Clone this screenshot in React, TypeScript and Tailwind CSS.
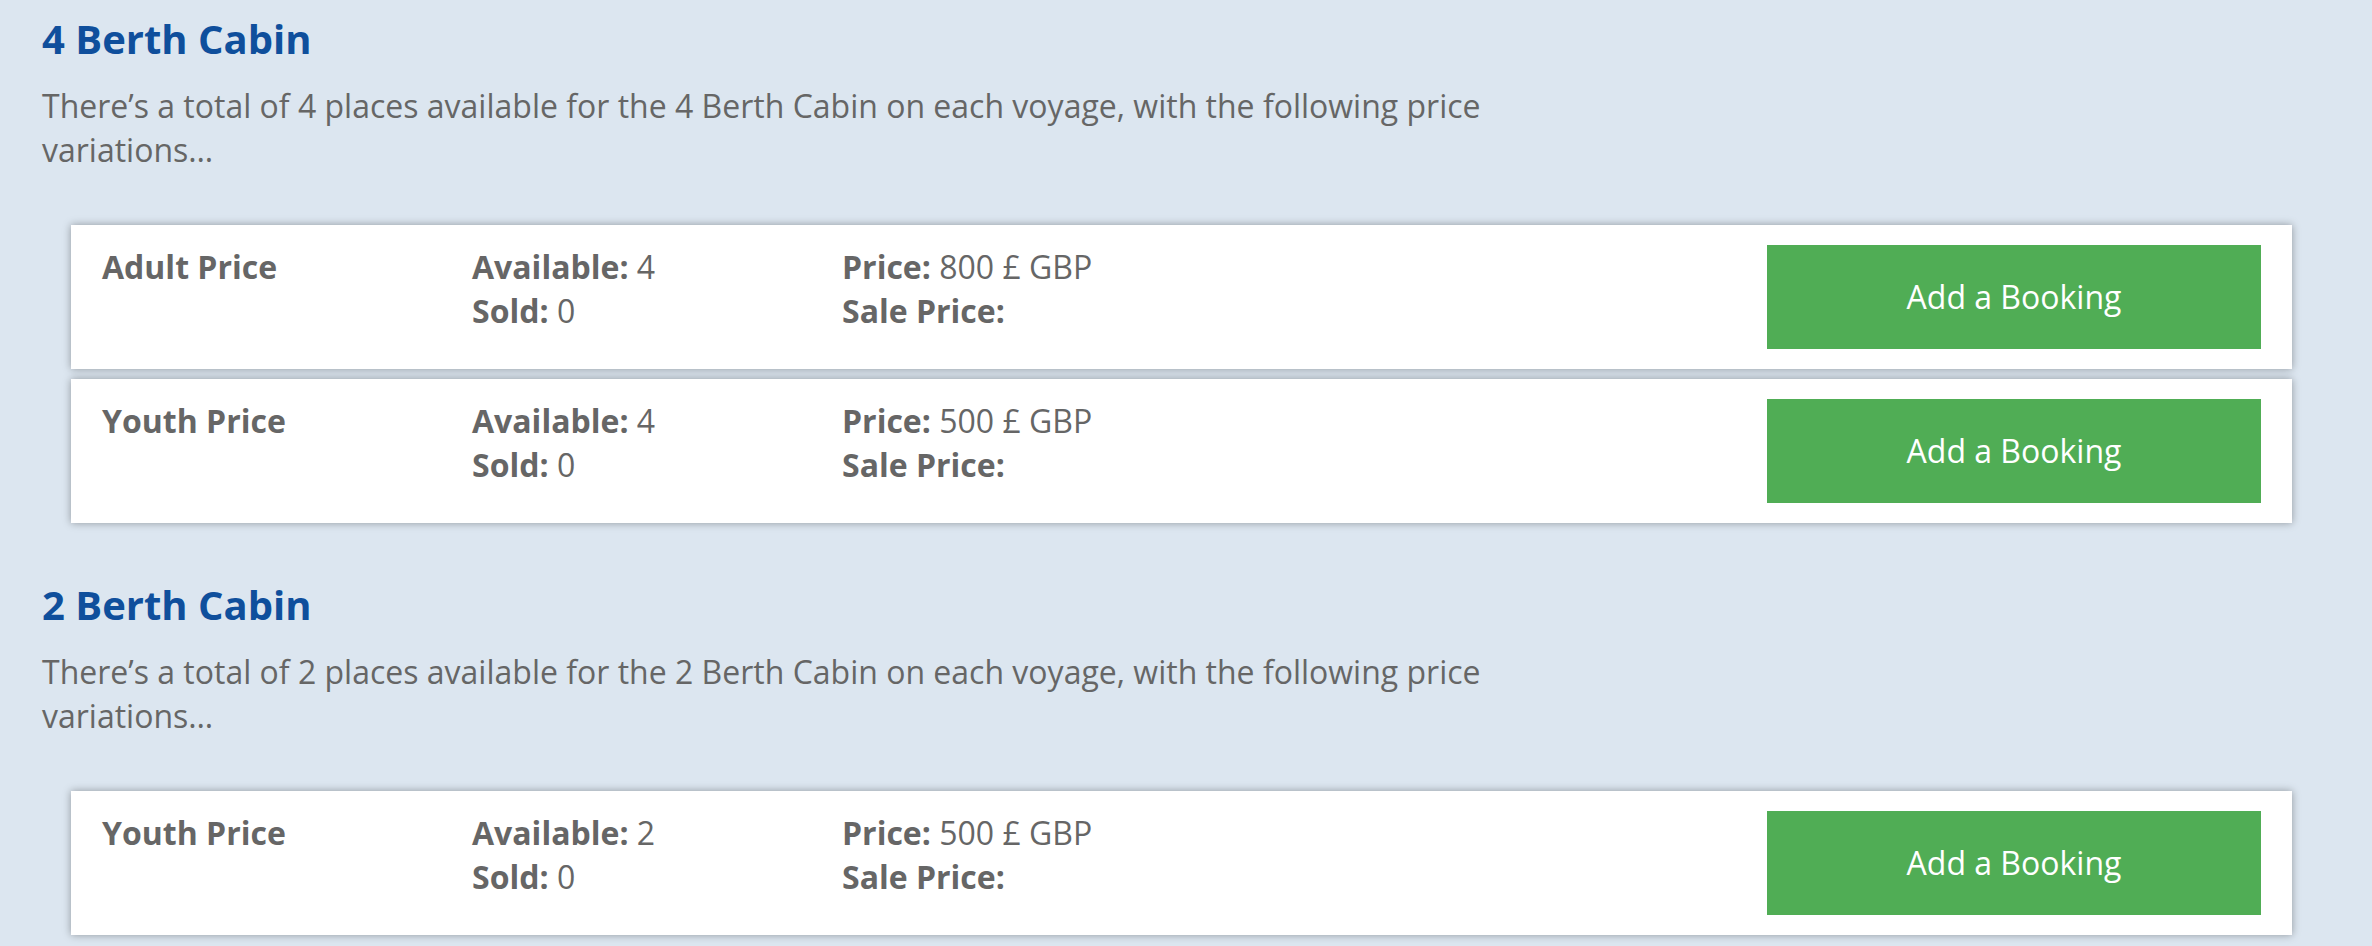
const cabins = [
  {
    name: "4 Berth Cabin",
    places: 4,
    rows: [
      { label: "Adult Price", available: 4, sold: 0, price: "800 £ GBP" },
      { label: "Youth Price", available: 4, sold: 0, price: "500 £ GBP" },
    ],
  },
  {
    name: "2 Berth Cabin",
    places: 2,
    rows: [{ label: "Youth Price", available: 2, sold: 0, price: "500 £ GBP" }],
  },
]

type Row = { label: string; available: number; sold: number; price: string }

function PriceRow({ row }: { row: Row }) {
  return (
    <div className="flex items-start bg-white px-[31px] py-[20px] shadow-[0_0_8px_rgba(0,0,0,0.35)]">
      <div className="w-[370px] font-bold">{row.label}</div>
      <div className="w-[370px]">
        <div>
          <span className="font-bold">Available:</span> {row.available}
        </div>
        <div>
          <span className="font-bold">Sold:</span> {row.sold}
        </div>
      </div>
      <div className="w-[370px]">
        <div>
          <span className="font-bold">Price:</span> {row.price}
        </div>
        <div>
          <span className="font-bold">Sale Price:</span>
        </div>
      </div>
      <div className="flex-1" />
      <button className="flex h-[104px] w-[494px] items-center justify-center bg-[#50ad55] text-white">
        Add a Booking
      </button>
    </div>
  )
}

export default function App() {
  return (
    <div
      className="min-h-screen bg-[#dce6f0] pl-[42px] pr-[80px] pt-[11px] text-[#666666]"
      style={{ fontFamily: '"Open Sans", "Liberation Sans", sans-serif' }}
    >
      {cabins.map((cabin, i) => (
        <section key={cabin.name} className={i > 0 ? "mt-[54px]" : ""}>
          {/* Cabin heading */}
          <h2 className="text-[40px] font-bold leading-[56px] text-[#0f4f9c]">{cabin.name}</h2>
          <p className="mt-[17px] max-w-[1520px] text-[32px] leading-[44px]">
            There’s a total of {cabin.places} places available for the {cabin.name} on each voyage, with the
            following price variations…
          </p>

          {/* Price variations */}
          <div className="ml-[29px] mt-[53px] flex flex-col gap-[10px] text-[32px] leading-[44px]">
            {cabin.rows.map((row) => (
              <PriceRow key={row.label} row={row} />
            ))}
          </div>
        </section>
      ))}
    </div>
  )
}
